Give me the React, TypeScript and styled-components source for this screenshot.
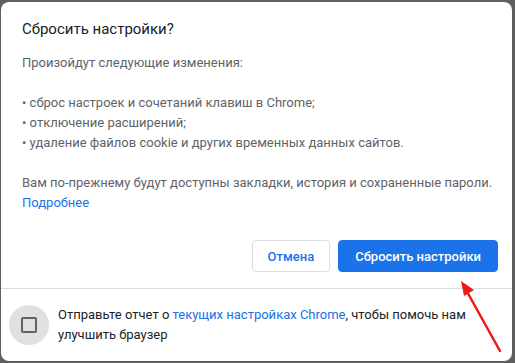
import styled, { createGlobalStyle } from "styled-components";

const GlobalStyle = createGlobalStyle`
  html, body {
    margin: 0;
    padding: 0;
    background: #5f5f5f;
  }
  body {
    font-family: Roboto, "Liberation Sans", Arial, sans-serif;
  }
`;

const Backdrop = styled.div`
  position: relative;
  width: 515px;
  height: 363px;
  box-sizing: border-box;
  padding: 2px 3px 2px 1px;
  background: #5f5f5f;
`;

const Dialog = styled.div`
  display: flex;
  flex-direction: column;
  height: 100%;
  background: #fff;
  border-radius: 8px;
  overflow: hidden;
`;

const Body = styled.div`
  padding: 17px 14px 0 21px;
`;

const Title = styled.h2`
  margin: 0 0 14px;
  font-size: 15px;
  font-weight: 400;
  line-height: 20px;
  color: #202124;
`;

const Text = styled.div`
  font-size: 13px;
  line-height: 20px;
  color: #5f6368;
`;

const Line = styled.div<{ $gap?: boolean }>`
  margin-top: ${(p) => (p.$gap ? "20px" : "0")};
`;

const Link = styled.a`
  color: #1a73e8;
  text-decoration: none;
`;

const Actions = styled.div`
  display: flex;
  justify-content: flex-end;
  gap: 8px;
  padding: 27px 14px 16px 0;
`;

const Button = styled.button<{ $primary?: boolean }>`
  height: 32px;
  padding: 0 ${(p) => (p.$primary ? "16px" : "15px")};
  border-radius: 4px;
  border: 1px solid ${(p) => (p.$primary ? "#1a73e8" : "#dadce0")};
  background: ${(p) => (p.$primary ? "#1a73e8" : "#fff")};
  color: ${(p) => (p.$primary ? "#fff" : "#1a73e8")};
  font-family: Roboto, "Liberation Sans", Arial, sans-serif;
  font-size: 13px;
  font-weight: 500;
`;

const Footer = styled.div`
  display: flex;
  align-items: center;
  gap: 9px;
  border-top: 1px solid #dadce0;
  padding: 0 20px 0 8px;
  flex: 1;
`;

const CheckCircle = styled.div`
  flex: none;
  width: 40px;
  height: 40px;
  border-radius: 50%;
  background: #e0e0e0;
  display: flex;
  align-items: center;
  justify-content: center;
`;

const Box = styled.div`
  width: 12px;
  height: 12px;
  border: 2px solid #5f6368;
  border-radius: 2px;
`;

const FooterText = styled.div`
  font-size: 13px;
  line-height: 20px;
  color: #202124;
`;

const Arrow = styled.svg`
  position: absolute;
  left: 455px;
  top: 278px;
  pointer-events: none;
`;

export default function App() {
  return (
    <>
      <GlobalStyle />
      <Backdrop>
        <Dialog>
          <Body>
            <Title>Сбросить настройки?</Title>
            <Text>
              <Line>Произойдут следующие изменения:</Line>
              <Line $gap>• сброс настроек и сочетаний клавиш в Chrome;</Line>
              <Line>• отключение расширений;</Line>
              <Line>• удаление файлов cookie и других временных данных сайтов.</Line>
              <Line $gap>
                Вам по-прежнему будут доступны закладки, история и сохраненные пароли.
              </Line>
              <Line>
                <Link href="#">Подробнее</Link>
              </Line>
            </Text>
          </Body>
          <Actions>
            <Button>Отмена</Button>
            <Button $primary>Сбросить настройки</Button>
          </Actions>
          <Footer>
            <CheckCircle>
              <Box />
            </CheckCircle>
            <FooterText>
              Отправьте отчет о <Link href="#">текущих настройках Chrome</Link>, чтобы
              помочь нам улучшить браузер
            </FooterText>
          </Footer>
        </Dialog>
        <Arrow width="56" height="80" viewBox="0 0 56 80">
          <line x1="45" y1="73" x2="10" y2="10" stroke="#f01818" strokeWidth="2.5" strokeLinecap="round" />
          <polygon points="6,3 19,12 9,18" fill="#f01818" />
        </Arrow>
      </Backdrop>
    </>
  );
}
